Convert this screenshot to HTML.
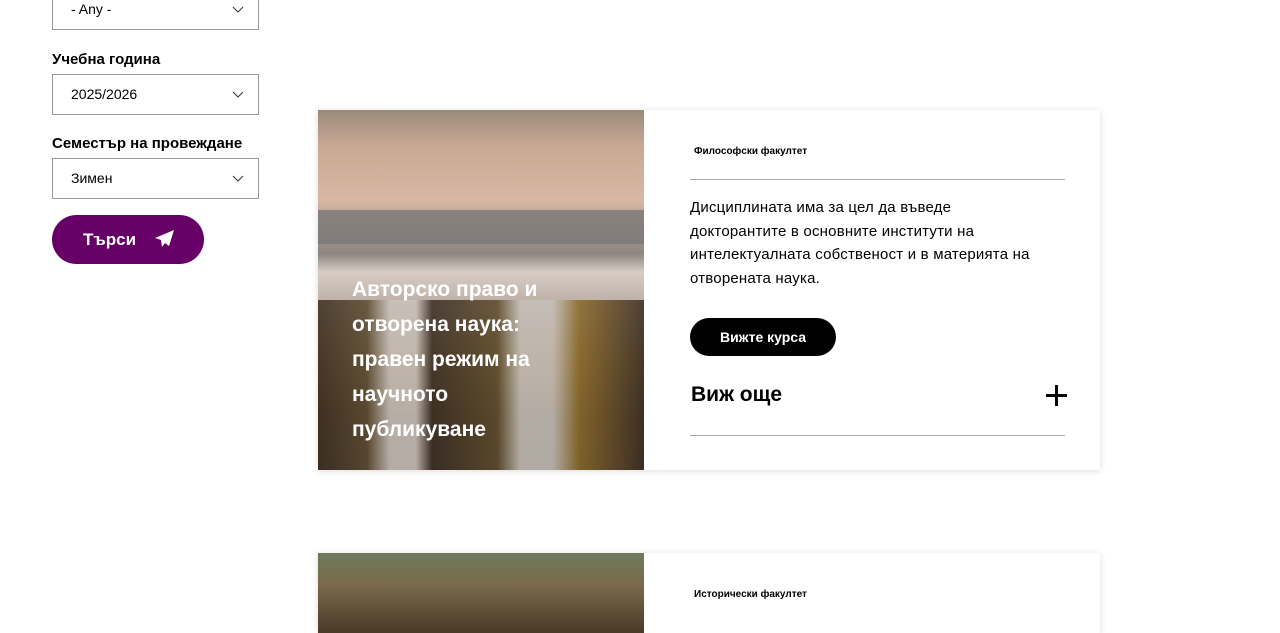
<!DOCTYPE html>
<html><head><meta charset="utf-8"><style>
*{margin:0;padding:0;box-sizing:border-box}
body{width:1280px;height:609px;overflow:hidden;background:#fff;font-family:"Liberation Sans",sans-serif;color:#000;position:relative}
.sel{position:absolute;left:52px;width:207px;height:41px;border:1px solid #999;background:#fff;font-size:14px;padding-left:18px;line-height:39px}
.sel svg{position:absolute;right:14px;top:16px}
.lbl{position:absolute;left:52px;font-size:15px;font-weight:bold}
.btn{position:absolute;left:52px;top:215px;width:152px;height:49px;border-radius:25px;background:#660066;color:#fff;font-weight:bold;font-size:17px;line-height:49px;padding-left:31px}
.card{position:absolute;left:318px;width:782px;background:#fff;box-shadow:0 1px 6px rgba(0,0,0,.15)}
.img{position:absolute;left:0;top:0;width:326px;height:100%;overflow:hidden}
.fac{position:absolute;left:376px;font-size:10px;font-weight:bold}
</style></head><body>
<div class="sel" style="top:-11px">- Any -<svg width="12" height="8"><path d="M1 1l5 5 5-5" stroke="#333" stroke-width="1" fill="none"/></svg></div>
<div class="lbl" style="top:51px">Учебна година</div>
<div class="sel" style="top:74px">2025/2026<svg width="12" height="8"><path d="M1 1l5 5 5-5" stroke="#333" stroke-width="1" fill="none"/></svg></div>
<div class="lbl" style="top:135px">Семестър на провеждане</div>
<div class="sel" style="top:158px">Зимен<svg width="12" height="8"><path d="M1 1l5 5 5-5" stroke="#333" stroke-width="1" fill="none"/></svg></div>
<div class="btn">Търси<svg style="position:absolute;left:103px;top:15px" width="20" height="19" viewBox="0 0 20 19"><path d="M19 0L0 8l6 2 1 7 3-4 4 3z" fill="#fff"/></svg></div>

<div class="card" style="top:110px;height:360px">
 <div class="img">
  <div style="position:absolute;inset:0;background:linear-gradient(180deg,#9a8a7a 0%,#c9a894 10%,#d8b8a4 25%,#b7a49a 30%,#8d8580 40%,#d6cdc5 45%,#b9aaa0 55%,#8a7050 70%,#4c3b2c 85%,#3a302a 100%)"></div>
  <div style="position:absolute;left:0;top:100px;width:326px;height:34px;background:#7b7775;opacity:.8"></div>
  <div style="position:absolute;left:0;top:190px;width:326px;height:170px;background:linear-gradient(90deg,#3b2d20,#5a4a30 15%,#c9c2bb 22%,#c9c2bb 30%,#3a2d22 35%,#5c4a2a 55%,#c6c0b9 62%,#c6c0b9 72%,#8a6a2a 80%,#3a2d22 100%);opacity:.85"></div>
  <div style="position:absolute;left:34px;top:162px;color:#fff;font-weight:bold;font-size:21px;line-height:35px">Авторско право и<br>отворена наука:<br>правен режим на<br>научното<br>публикуване</div>
 </div>
 <div class="fac" style="top:36px">Философски факултет</div>
 <div style="position:absolute;left:372px;top:69px;width:375px;border-top:1px solid #aaa"></div>
 <div style="position:absolute;left:372px;top:86px;width:400px;font-size:15px;line-height:23.5px;letter-spacing:.2px">Дисциплината има за цел да въведе<br>докторантите в основните институти на<br>интелектуалната собственост и в материята на<br>отворената наука.</div>
 <div style="position:absolute;left:372px;top:208px;width:146px;height:38px;border-radius:19px;background:#000;color:#fff;font-weight:bold;font-size:14px;text-align:center;line-height:38px">Вижте курса</div>
 <div style="position:absolute;left:373px;top:273px;font-size:21px;font-weight:bold">Виж още</div>
 <div style="position:absolute;left:728px;top:275px;width:21px;height:21px"><div style="position:absolute;left:0;top:9px;width:21px;height:3px;background:#000"></div><div style="position:absolute;left:9px;top:0;width:3px;height:21px;background:#000"></div></div>
 <div style="position:absolute;left:372px;top:325px;width:375px;border-top:1px solid #aaa"></div>
</div>

<div class="card" style="top:553px;height:80px">
 <div class="img" style="background:linear-gradient(180deg,#6e7a5e,#7a6a4a 40%,#4a3a28)"></div>
 <div class="fac" style="top:36px">Исторически факултет</div>
</div>
</body></html>
